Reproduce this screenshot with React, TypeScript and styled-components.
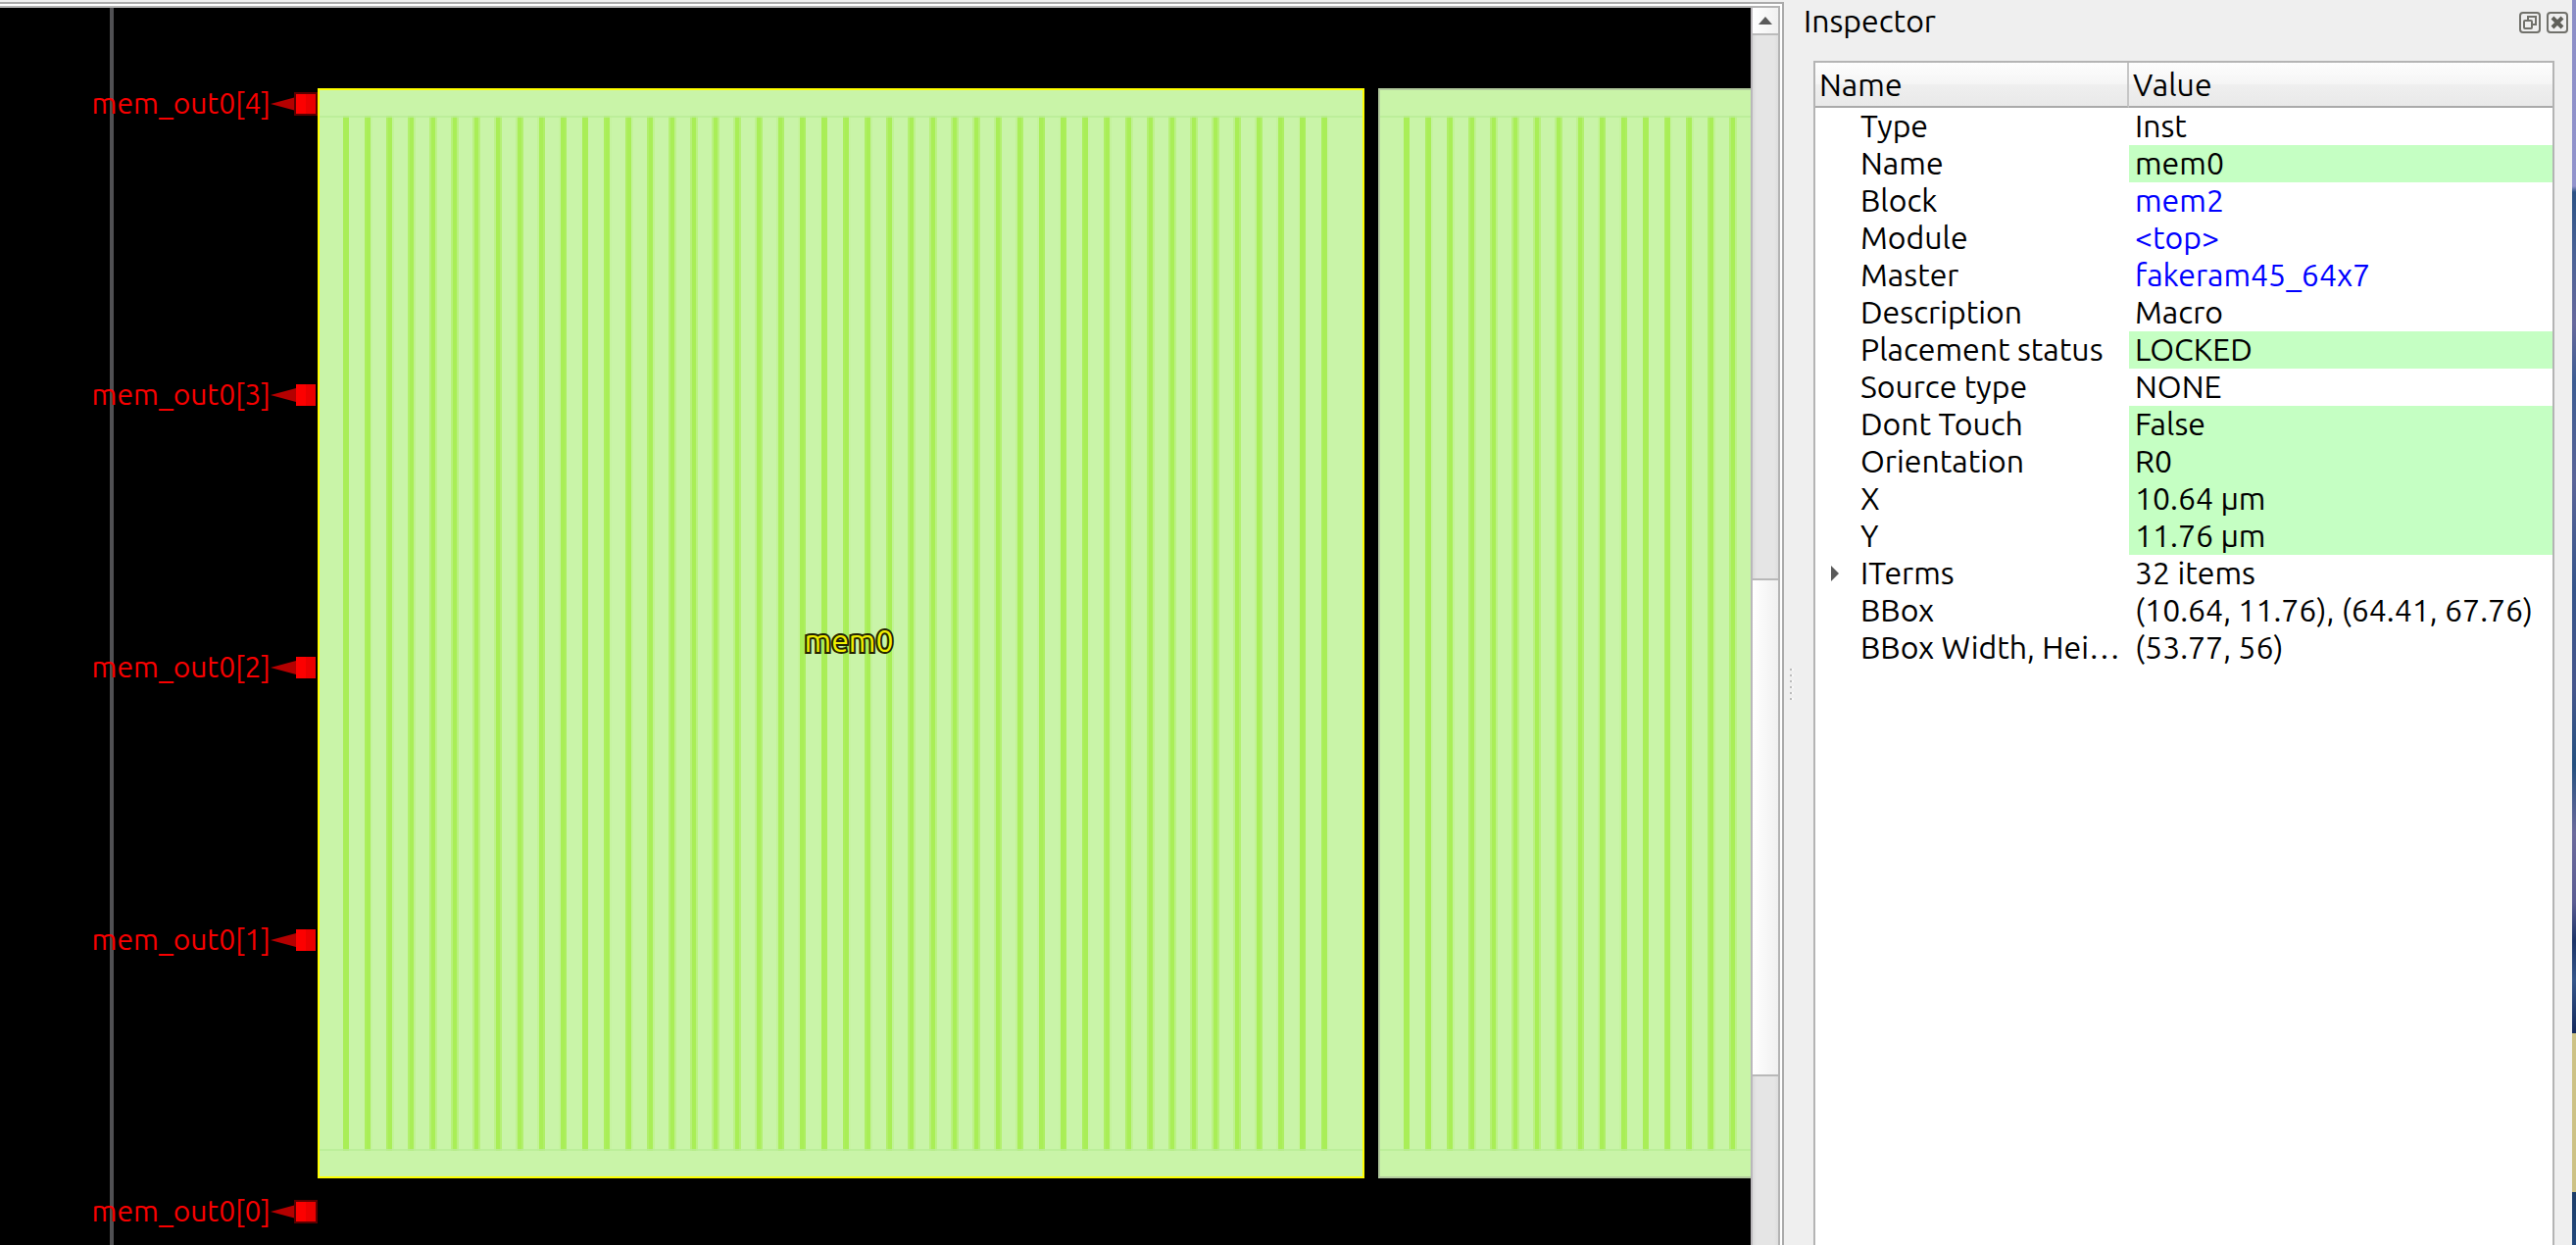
import React from "react";
import styled, { createGlobalStyle } from "styled-components";

const Global = createGlobalStyle`
  * { box-sizing: border-box; }
  body { margin: 0; background: #efefef; }
`;

const uiFont = `"Ubuntu", "Noto Sans", "Open Sans", sans-serif`;

const Window = styled.div`
  display: flex;
  height: 100vh;
  overflow: hidden;
  background: #efefef;
  color: #000;
  font-family: ${uiFont};
  font-size: 32px;
`;

const Viewer = styled.main`
  flex: 1;
  min-width: 0;
  display: flex;
  margin-top: 2px;
  padding-top: 2px;
  border-top: 2px solid #aaa;
  border-right: 2px solid #aaa;
  background: #fff;
`;

const ScrollArea = styled.div`
  flex: 1;
  min-width: 0;
  display: flex;
  margin-right: 2px;
  border-top: 2px solid #b4b4b4;
  border-right: 2px solid #b4b4b4;
`;

const Canvas = styled.svg`
  flex: 1;
  min-width: 0;
  height: 100%;
  background: #000;
`;

const ScrollBar = styled.div`
  flex: 0 0 28px;
  display: flex;
  flex-direction: column;
  border-left: 2px solid #bab7bb;
  background: linear-gradient(90deg, #d9d9d9 0, #e5e5e5 4px, #e5e5e5 22px, #dedede 100%);
`;

const ScrollButton = styled.button`
  height: 28px;
  padding: 0;
  border: 0;
  border-bottom: 2px solid #bbb;
  background: linear-gradient(90deg, #fff, #f0f0f0);
  display: grid;
  place-items: center;
`;

const Track = styled.div`
  flex: 1;
  display: grid;
  grid-template-rows: 554fr 508fr 172fr;
`;

const Thumb = styled.div`
  grid-row: 2;
  border: solid #b8b8b8;
  border-width: 2px 0;
  background: linear-gradient(90deg, #fff, #f0f0f0);
`;

const Dock = styled.aside`
  flex: 0 0 804px;
  display: flex;
  margin-top: 2px;
`;

const Splitter = styled.div`
  flex: 0 0 14px;
  display: flex;
  flex-direction: column;
  justify-content: center;
  align-items: center;
  gap: 4px;
  padding-top: 124px;
`;

const Dot = styled.i`
  width: 2px;
  height: 2px;
  background: #bcbcbc;
  box-shadow: 2px 0 #f8f8f8;
`;

const Panel = styled.section`
  flex: 1;
  min-width: 0;
  display: flex;
  flex-direction: column;
`;

const TitleBar = styled.header`
  height: 60px;
  display: flex;
  align-items: flex-start;
  padding: 0 4px 0 6px;
`;

const Title = styled.h1`
  flex: 1;
  margin: 0;
  font-size: 32px;
  font-weight: 400;
  line-height: 38px;
`;

const TitleButton = styled.button`
  width: 22px;
  height: 22px;
  margin: 10px 0 0 6px;
  padding: 0;
  border: 0;
  background: none;
  svg { display: block; }
`;

const Tree = styled.div`
  flex: 1;
  margin: 0 18px 0 16px;
  border: 2px solid #b4b4b4;
  border-bottom: 0;
  background: #fff;
`;

const Table = styled.table`
  width: 100%;
  border-collapse: separate;
  border-spacing: 0;
  table-layout: fixed;
`;

const HeadCell = styled.th<{ $width?: number }>`
  width: ${(p) => (p.$width ? p.$width + "px" : "auto")};
  height: 46px;
  padding: 0 4px;
  border-bottom: 2px solid #aaa;
  border-right: ${(p) => (p.$width ? "2px solid #c6c6c6" : "0")};
  background: linear-gradient(#fdfdfd, #f5f5f5 50%, #efefef 51%, #e9e9e9);
  font-weight: 400;
  line-height: 44px;
  text-align: left;
`;

const NameCell = styled.td`
  height: 38px;
  padding: 0 4px 0 0;
  line-height: 36px;
  vertical-align: top;
  div { display: flex; }
`;

const Expander = styled.span`
  flex: 0 0 46px;
  height: 38px;
  display: flex;
  align-items: center;
  padding-left: 16px;
`;

const Name = styled.span`
  overflow: hidden;
  text-overflow: ellipsis;
  white-space: nowrap;
`;

const ExpandButton = styled.button`
  width: 8px;
  height: 16px;
  padding: 0;
  border: 0;
  background: none;
  svg { display: block; }
`;

const ValueCell = styled.td<{ $editable?: boolean }>`
  height: 38px;
  padding: 0 0 0 6px;
  background: ${(p) => (p.$editable ? "#c5ffc3" : "#fff")};
  line-height: 36px;
  vertical-align: top;
  white-space: nowrap;
`;

const Link = styled.a`
  color: #00f;
  text-decoration: none;
`;

const Desktop = styled.div`
  flex: 0 0 4px;
  background: linear-gradient(
    #8b8dc6 0, #9193cc 190px, #2c5285 196px, #4a6296 260px, #66689c 330px,
    #3c5c92 390px, #5a6498 490px, #35548a 600px, #46568c 700px, #24507f 780px,
    #6c6a9c 850px, #5a5c92 920px, #1c3468 960px, #35568a 1000px, #13285a 1054px,
    #cdc285 1054px, #cdc285 1216px, #1c3c68 1216px, #23497c 100%
  );
`;

type Row = { name: string; value: string; editable?: boolean; link?: boolean; children?: boolean };

const rows: Row[] = [
  { name: "Type", value: "Inst" },
  { name: "Name", value: "mem0", editable: true },
  { name: "Block", value: "mem2", link: true },
  { name: "Module", value: "<top>", link: true },
  { name: "Master", value: "fakeram45_64x7", link: true },
  { name: "Description", value: "Macro" },
  { name: "Placement status", value: "LOCKED", editable: true },
  { name: "Source type", value: "NONE" },
  { name: "Dont Touch", value: "False", editable: true },
  { name: "Orientation", value: "R0", editable: true },
  { name: "X", value: "10.64 μm", editable: true },
  { name: "Y", value: "11.76 μm", editable: true },
  { name: "ITerms", value: "32 items", children: true },
  { name: "BBox", value: "(10.64, 11.76), (64.41, 67.76)" },
  { name: "BBox Width, Height", value: "(53.77, 56)" },
];

const pins = [
  { label: "mem_out0[4]", y: 98, size: 20 },
  { label: "mem_out0[3]", y: 395, size: 22 },
  { label: "mem_out0[2]", y: 673, size: 22 },
  { label: "mem_out0[1]", y: 951, size: 22 },
  { label: "mem_out0[0]", y: 1228, size: 20 },
];

const PITCH = 11.09;

function Stripe({ left, index }: { left: number; index: number }) {
  const offset = index * PITCH;
  const whole = Math.floor(offset);
  const part = offset - whole;
  const x = left + 26 + whole * 2;
  return (
    <g fill="#a9ee57">
      <rect x={x} y={110} width={2} height={1056} opacity={1 - part} />
      <rect x={x + 2} y={110} width={4} height={1056} />
      <rect x={x + 6} y={110} width={2} height={1056} opacity={part} />
    </g>
  );
}

function Macro({ left, width, selected }: { left: number; width: number; selected?: boolean }) {
  return (
    <g shapeRendering="crispEdges">
      <rect x={left} y={82} width={width} height={1112} fill="#c9f4a8" />
      {Array.from({ length: 46 }, (_, i) => (
        <Stripe key={i} left={left} index={i} />
      ))}
      <rect x={left} y={110} width={width} height={2} fill="#b9ec96" opacity={0.8} />
      <rect x={left} y={1164} width={width} height={2} fill="#b9ec96" opacity={0.8} />
      <rect
        x={left + 1}
        y={83}
        width={width - 2}
        height={1110}
        fill="none"
        stroke={selected ? "#ffff00" : "#b3cb9e"}
        strokeWidth={2}
      />
    </g>
  );
}

function Pin({ label, y, size }: { label: string; y: number; size: number }) {
  const top = y - size / 2;
  return (
    <g>
      <path d={`M276 ${y} L302 ${y - 7} V${y + 7} Z`} fill="#b40000" />
      {size === 20 && <rect x={300} y={y - 12} width={24} height={24} fill="#5a0000" />}
      <rect x={302} y={top} width={20} height={size} fill="#fc0000" />
      <rect x={312} y={top} width={10} height={size} fill="#ea0000" />
      <text x={276} y={y + 10} fill="#f80000" fontSize={30} textAnchor="end">
        {label}
      </text>
    </g>
  );
}

export default function App() {
  return (
    <>
      <Global />
      <Window>
        <Viewer>
          <ScrollArea>
            <Canvas role="img" aria-label="Layout view">
              <rect x={112} y={0} width={4} height="100%" fill="#505053" />
              <Macro left={324} width={1068} selected />
              <Macro left={1406} width={1068} />
              {pins.map((p) => (
                <Pin key={p.label} {...p} />
              ))}
              <text
                x={866}
                y={657}
                textAnchor="middle"
                fontSize={32}
                fill="#f0f000"
                stroke="#222200"
                strokeWidth={4}
                paintOrder="stroke"
              >
                mem0
              </text>
            </Canvas>
            <ScrollBar>
              <ScrollButton aria-label="Scroll up">
                <svg width="14" height="8" viewBox="0 0 14 8">
                  <path d="M0 8 L7 0 L14 8 Z" fill="#5a5a5a" />
                </svg>
              </ScrollButton>
              <Track>
                <Thumb />
              </Track>
            </ScrollBar>
          </ScrollArea>
        </Viewer>
        <Dock>
          <Splitter>
            {Array.from({ length: 6 }, (_, i) => (
              <Dot key={i} />
            ))}
          </Splitter>
          <Panel>
            <TitleBar>
              <Title>Inspector</Title>
              <TitleButton aria-label="Float">
                <svg width="22" height="22" viewBox="0 0 22 22" fill="none" stroke="#71716b" strokeWidth="2">
                  <rect x="1" y="1" width="20" height="20" rx="3" />
                  <path d="M9 8 V5 H17 V13 H14" />
                  <rect x="5" y="9" width="8" height="8" rx="1" />
                </svg>
              </TitleButton>
              <TitleButton aria-label="Close">
                <svg width="22" height="22" viewBox="0 0 22 22" fill="none" stroke="#71716b" strokeWidth="2">
                  <rect x="1" y="1" width="20" height="20" rx="3" />
                  <path d="M6 6 L16 16 M16 6 L6 16" stroke="#5f5f59" strokeWidth="4" />
                </svg>
              </TitleButton>
            </TitleBar>
            <Tree>
              <Table>
                <thead>
                  <tr>
                    <HeadCell $width={320}>Name</HeadCell>
                    <HeadCell>Value</HeadCell>
                  </tr>
                </thead>
                <tbody>
                  {rows.map((r) => (
                    <tr key={r.name}>
                      <NameCell>
                        <div>
                          <Expander>
                            {r.children && (
                              <ExpandButton aria-label={"Expand " + r.name}>
                                <svg width="8" height="16" viewBox="0 0 8 16">
                                  <path d="M0 0 L8 8 L0 16 Z" fill="#5a5a5a" />
                                </svg>
                              </ExpandButton>
                            )}
                          </Expander>
                          <Name>{r.name}</Name>
                        </div>
                      </NameCell>
                      <ValueCell $editable={r.editable}>
                        {r.link ? <Link href="#">{r.value}</Link> : r.value}
                      </ValueCell>
                    </tr>
                  ))}
                </tbody>
              </Table>
            </Tree>
          </Panel>
        </Dock>
        <Desktop />
      </Window>
    </>
  );
}
